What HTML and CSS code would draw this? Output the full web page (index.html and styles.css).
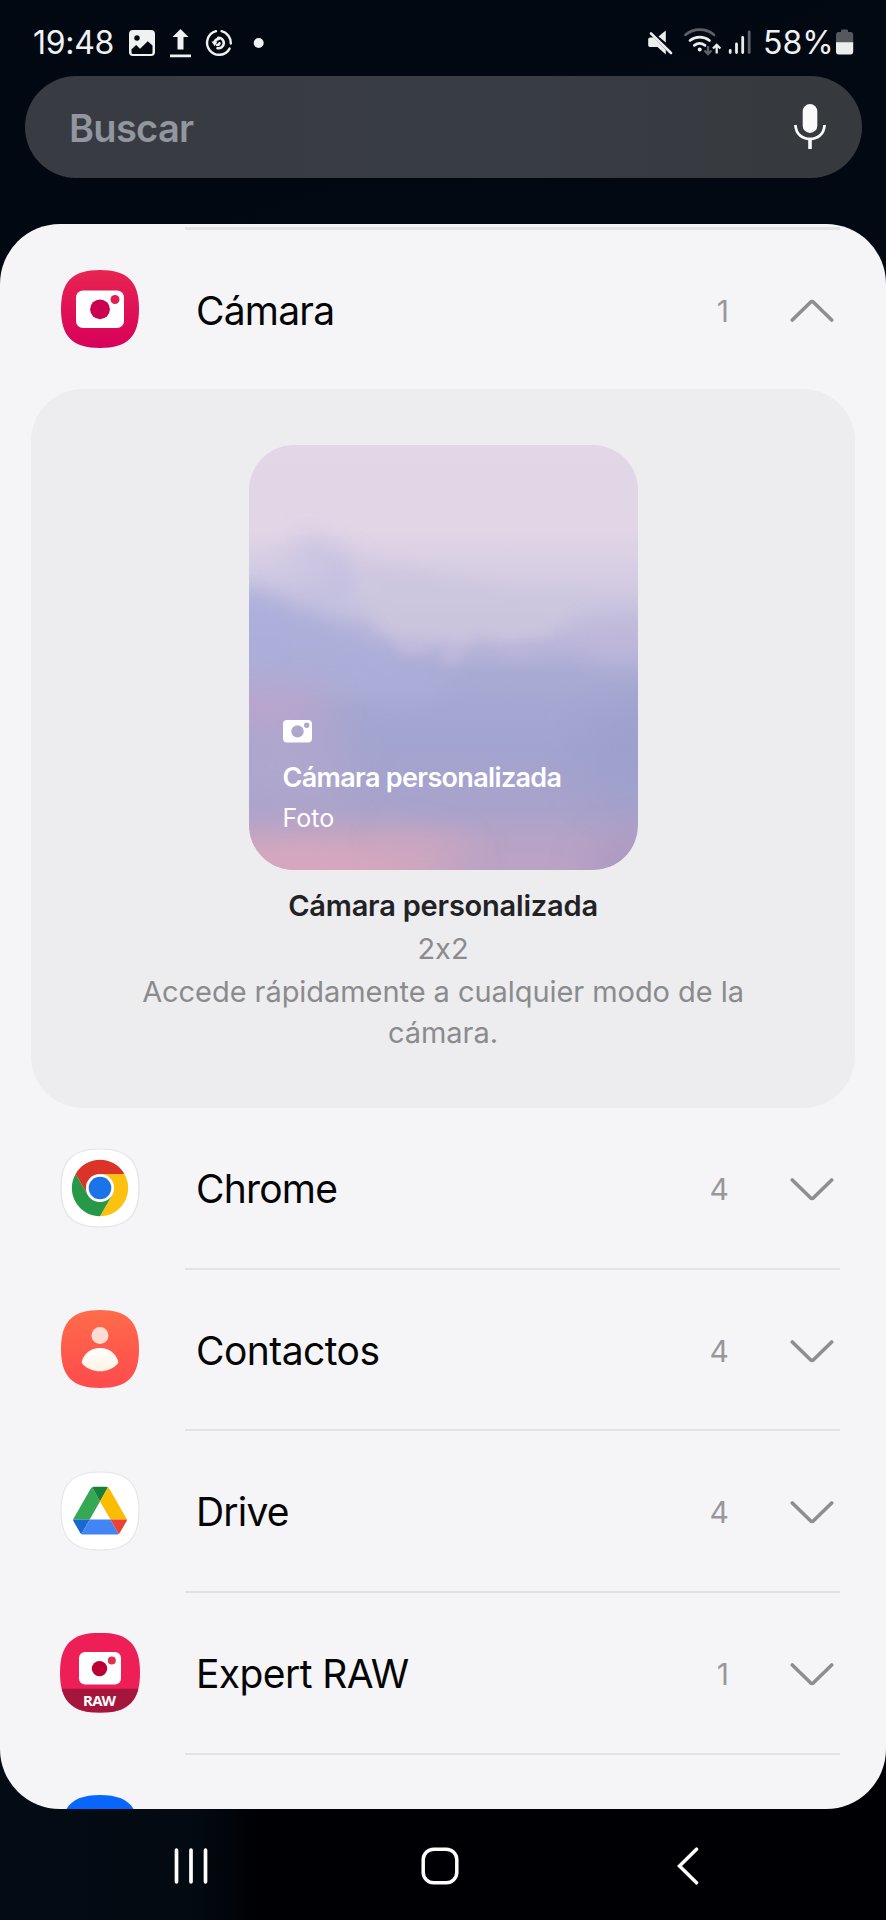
FILE: index.html
```html
<!DOCTYPE html>
<html lang="es">
<head>
<meta charset="utf-8">
<title>Widgets</title>
<link rel="stylesheet" href="styles.css">
</head>
<body>
<svg class="defs" width="0" height="0" aria-hidden="true">
  <defs>
    <linearGradient id="camBg" x1="0" y1="0" x2="0" y2="1"><stop offset="0" stop-color="#e82450"/><stop offset="1" stop-color="#d8005c"/></linearGradient>
    <linearGradient id="conBg" x1="0" y1="0" x2="0" y2="1"><stop offset="0" stop-color="#ff6c4a"/><stop offset="1" stop-color="#ff4a4c"/></linearGradient>
    <linearGradient id="conBody" x1="0" y1="0" x2="0" y2="1"><stop offset="0" stop-color="#ffffff"/><stop offset="1" stop-color="#fff3e4"/></linearGradient>
    <path id="squircle" d="M39 0C66.500 0 78 11.500 78 39S66.500 78 39 78 0 66.500 0 39 11.500 0 39 0Z"/>
    <clipPath id="squircleClip"><use href="#squircle"/></clipPath>
  </defs>
</svg>
<div class="screen">
  <header class="status">
    <span class="clock">19:48</span>
    <svg class="st-left" width="140" height="32" viewBox="126 27 140 32">
      <path fill="#f0f2f2" fill-rule="evenodd" d="M133 30h18a4 4 0 0 1 4 4v18a4 4 0 0 1-4 4h-18a4 4 0 0 1-4-4V34a4 4 0 0 1 4-4Zm4 5.300a2.700 2.700 0 1 0 0 5.400a2.700 2.700 0 0 0 0-5.400ZM131.500 49.300V52.500a1.500 1.500 0 0 0 1.500 1.500h18a1.500 1.500 0 0 0 1.500-1.500V45.500L147.800 41.200 140 48.800 136.200 45Z"/>
      <path fill="#f0f2f2" d="M180.500 29l8 8h-5v12.500h-6V37h-5ZM170 54.500h21v2.700h-21Z"/>
      <g fill="none" stroke="#f0f2f2" stroke-width="2.400" stroke-linecap="round">
        <path d="M216 31.200A12 12 0 1 0 229.600 48.600M221.600 31.200A12 12 0 0 1 230.800 43.500"/>
        <path d="M214.300 42.600a4.600 4.600 0 0 1 4.400-3.600M218.300 37.700a5.300 5.300 0 1 1-.8 10.500M219.500 43.300a2.300 2.300 0 0 1-2.300 1.700" stroke-width="2.600"/>
      </g>
      <path fill="#f0f2f2" d="M211.500 41.600h6l-2.800 4.600Z"/>
      <circle cx="258.700" cy="43" r="5" fill="#f0f2f2"/>
    </svg>
    <svg class="st-right" width="106" height="32" viewBox="647 27 106 32">
      <path fill="#eceeee" d="M658.500 36.500 665.800 30.500V42.500ZM650 37.500h3.500L665.800 50v4.500l-8.300-7.500H650a1.800 1.800 0 0 1-1.800-1.800v-6A1.800 1.800 0 0 1 650 37.500Z"/>
      <path stroke="#eceeee" stroke-width="2.600" stroke-linecap="round" d="M651 33.500 671 53"/>
      <g fill="none" stroke-width="2.700" stroke-linecap="round">
        <path stroke="#5d6167" d="M685.500 34.800a22.500 22.500 0 0 1 28.500 0"/>
        <path stroke="#eceeee" d="M690 40.500a15.500 15.500 0 0 1 19.500 0M694.300 45.400a9 9 0 0 1 10.700 0"/>
      </g>
      <circle cx="699.700" cy="49.600" r="2" fill="#eceeee"/>
      <path fill="none" stroke="#5d6167" stroke-width="2.300" d="M708 46v8M704.500 50.500 708 54l3.500-3.500"/>
      <path fill="none" stroke="#eceeee" stroke-width="2.300" d="M716.700 53.500V45M713 48.500l3.700-3.700 3.700 3.700"/>
      <g stroke-width="2.800" stroke-linecap="round"><path stroke="#eceeee" d="M730.200 50.300v2.300M736.500 44v8.600M742.700 37.500v15.100"/><path stroke="#5d6167" d="M749.200 32v20.600"/></g>
    </svg>
    <span class="percent">58%</span>
    <svg class="batt" width="18" height="27" viewBox="0 0 18 27">
      <path fill="#55585d" d="M5 3V1.800Q5 .5 6.300 .5h4.400Q12 .5 12 1.800V3h2.500Q17.200 3 17.200 6v8H0V6Q0 3 2.700 3Z"/>
      <path fill="#eceeee" d="M0 13.300h17.200v9.200q0 3-2.700 3H2.700q-2.700 0-2.700-3Z"/>
    </svg>
  </header>

  <div class="search">
    <span class="search-label">Buscar</span>
    <svg width="34" height="46" viewBox="0 0 34 46">
      <rect x="9.700" y="0" width="14.600" height="29" rx="7.300" fill="#fafafa"/>
      <path fill="none" stroke="#fafafa" stroke-width="2.800" d="M2.400 21C3 30.500 9.500 35 17 35s14-4.500 14.600-14"/>
      <path stroke="#fafafa" stroke-width="3.600" d="M17 35v10"/>
    </svg>
  </div>

  <main class="sheet">
    <div class="line-top"></div>
    <section class="row row-open">
      <svg class="app-icon" viewBox="0 0 78 78">
        <use href="#squircle" fill="url(#camBg)"/>
        <rect x="15" y="20.500" width="48" height="37.500" rx="7" fill="#fff"/>
        <circle cx="39" cy="39.300" r="9.900" fill="#cc0050"/>
        <circle cx="54" cy="29.500" r="4.500" fill="#e02050"/>
      </svg>
      <div class="row-body"><span class="name">Cámara</span><span class="count">1</span>
        <svg class="chev" viewBox="0 0 44 24"><path d="M2.300 21 20.500 3.200Q22 1.900 23.500 3.200L41.700 21"/></svg></div>
    </section>

    <section class="card">
      <div class="preview">
        <svg class="sky" viewBox="0 0 389 425" preserveAspectRatio="none">
          <defs>
            <linearGradient id="sky" x1="0" y1="0" x2="0" y2="1">
              <stop offset="0" stop-color="#e1d7e7"/><stop offset=".2" stop-color="#e1d5e6"/><stop offset=".28" stop-color="#d9cfe4"/>
              <stop offset=".38" stop-color="#cac6df"/><stop offset=".46" stop-color="#bcb7da"/><stop offset=".53" stop-color="#aaabd4"/>
              <stop offset=".62" stop-color="#a3a7d1"/><stop offset=".72" stop-color="#a2a4cf"/><stop offset=".86" stop-color="#a9a3cb"/><stop offset=".94" stop-color="#b8a3c5"/><stop offset="1" stop-color="#bca3c4"/>
            </linearGradient>
            <filter id="b6" x="-50%" y="-50%" width="200%" height="200%"><feGaussianBlur stdDeviation="7"/></filter>
            <filter id="b12" x="-50%" y="-50%" width="200%" height="200%"><feGaussianBlur stdDeviation="12"/></filter>
            <filter id="b20" x="-50%" y="-80%" width="200%" height="260%"><feGaussianBlur stdDeviation="20"/></filter>
          </defs>
          <rect width="389" height="425" fill="url(#sky)"/>
          <path filter="url(#b12)" fill="#acaed9" opacity=".9" d="M-40 145 20 148 70 165 110 182 135 200 175 222 210 235 170 255-40 240Z"/>
          <path filter="url(#b12)" fill="#bfbcdf" opacity=".7" d="M55 88 110 115 105 170 30 150Z"/>
          <ellipse filter="url(#b12)" cx="45" cy="122" rx="38" ry="16" fill="#d0cae3" opacity=".8"/>
          <path filter="url(#b6)" fill="#ccc6de" opacity=".8" d="M110 115 170 125 260 145 340 155 300 190 260 200 230 190 205 208 190 195 160 203 128 180Z"/>
          <ellipse filter="url(#b6)" cx="203" cy="208" rx="11" ry="11" fill="#bfb8dc"/>
          <ellipse filter="url(#b6)" cx="163" cy="200" rx="16" ry="8" fill="#c1bbdc" opacity=".8"/>
          <ellipse filter="url(#b6)" cx="272" cy="207" rx="22" ry="7" fill="#bab5da" opacity=".8"/>
          <ellipse filter="url(#b12)" cx="375" cy="195" rx="45" ry="24" fill="#bfb7da" opacity=".7"/>
          <ellipse filter="url(#b20)" cx="0" cy="170" rx="22" ry="26" fill="#a8b0de" opacity=".8"/>
          <ellipse filter="url(#b20)" cx="10" cy="265" rx="80" ry="20" fill="#c5a5cb" opacity=".9"/>
          <ellipse filter="url(#b20)" cx="35" cy="320" rx="70" ry="40" fill="#b3a7ce" opacity=".8"/>
          <ellipse filter="url(#b20)" cx="390" cy="310" rx="60" ry="50" fill="#9b9fcc" opacity=".7"/>
          <ellipse filter="url(#b20)" cx="50" cy="420" rx="160" ry="26" fill="#dba8bc"/>
          <ellipse filter="url(#b12)" cx="180" cy="398" rx="60" ry="10" fill="#cfa8c1" opacity=".6"/>
          <ellipse filter="url(#b20)" cx="390" cy="425" rx="50" ry="30" fill="#a697c3" opacity=".9"/>
        </svg>
        <div class="preview-text">
          <svg width="29" height="23" viewBox="0 0 29 23"><path fill="#fff" fill-rule="evenodd" d="M4 0h21a4 4 0 0 1 4 4v14.500a4 4 0 0 1-4 4H4a4 4 0 0 1-4-4V4a4 4 0 0 1 4-4Zm10.500 5.200a6.200 6.200 0 1 0 0 12.400a6.200 6.200 0 0 0 0-12.400Zm9.200-2.700a2.700 2.700 0 1 0 0 5.400a2.700 2.700 0 0 0 0-5.400Z"/></svg>
          <span class="pv-title">Cámara personalizada</span>
          <span class="pv-sub">Foto</span>
        </div>
      </div>
      <span class="w-title">Cámara personalizada</span>
      <span class="w-size">2x2</span>
      <p class="w-desc">Accede rápidamente a cualquier modo de la<br>cámara.</p>
    </section>

    <section class="row">
      <svg class="app-icon" viewBox="0 0 78 78">
        <use href="#squircle" fill="#fff" stroke="#e3e3e5" stroke-width="1.200"/>
        <path fill="#db3328" d="M39 39 26.800 46 14.600 24.900A28.200 28.200 0 0 1 63.400 24.900H39Z"/>
        <path fill="#fdc112" d="M39 24.900H63.400A28.200 28.200 0 0 1 39 67.200L51.200 46Z"/>
        <path fill="#279847" d="M14.600 24.900A28.200 28.200 0 0 0 39 67.200L51.200 46 39 39 26.800 46Z"/>
        <circle cx="39" cy="39" r="14.100" fill="#fff"/><circle cx="39" cy="39" r="11.300" fill="#1a73e8"/>
      </svg>
      <div class="row-body"><span class="name">Chrome</span><span class="count">4</span>
        <svg class="chev" viewBox="0 0 44 24"><path d="M2.300 3 20.500 20.800Q22 22.100 23.500 20.800L41.700 3"/></svg></div>
    </section>
    <section class="row">
      <svg class="app-icon" viewBox="0 0 78 78">
        <use href="#squircle" fill="url(#conBg)"/>
        <circle cx="39" cy="25.500" r="8.500" fill="#ffdcd3"/>
        <path fill="url(#conBody)" d="M39 38C48.500 38 54.800 43.800 57.200 51.200Q57.700 53 56 54.400C51.500 58.800 45.500 61.200 39 61.200S26.500 58.800 22 54.400Q20.300 53 20.800 51.200C23.200 43.800 29.500 38 39 38Z"/>
      </svg>
      <div class="row-body"><span class="name name-loose">Contactos</span><span class="count">4</span>
        <svg class="chev" viewBox="0 0 44 24"><path d="M2.300 3 20.500 20.800Q22 22.100 23.500 20.800L41.700 3"/></svg></div>
    </section>
    <section class="row">
      <svg class="app-icon" viewBox="0 0 78 78">
        <use href="#squircle" fill="#fff" stroke="#e6e6e8" stroke-width="1.200"/>
        <path fill="#34a853" d="M12 47.600 29.500 17Q30.300 15.500 31.300 15.200L39 29.500 28.700 47.600Z"/>
        <path fill="#188038" d="M31.300 15.200Q32 14.800 33 14.800H45Q46 14.800 47 15.200L39 29.500Z"/>
        <path fill="#fbbc04" d="M47 15.200Q47.700 15.600 48.500 17L66 47.600H49.400L39 29.500Z"/>
        <path fill="#1967d2" d="M12 47.600H28.700L20.500 62Q19.600 61.500 19 60.500L12.500 49.300Q12 48.400 12 47.600Z"/>
        <path fill="#4285f4" d="M28.700 47.600H49.400L57.600 62Q57 62.500 56 62.500H22Q21 62.500 20.500 62Z"/>
        <path fill="#ea4335" d="M49.400 47.600H66Q66 48.400 65.500 49.300L59 60.500Q58.400 61.500 57.600 62Z"/>
      </svg>
      <div class="row-body"><span class="name">Drive</span><span class="count">4</span>
        <svg class="chev" viewBox="0 0 44 24"><path d="M2.300 3 20.500 20.800Q22 22.100 23.500 20.800L41.700 3"/></svg></div>
    </section>
    <section class="row">
      <svg class="app-icon" viewBox="0 0 78 78">
        <g clip-path="url(#squircleClip)" transform="translate(-1 -1.200) scale(1.026)"><rect width="78" height="78" fill="#ee1f57"/><rect y="54.500" width="78" height="24" fill="#a5163d"/></g>
        <rect x="18" y="18" width="42" height="32.500" rx="6" fill="#fff"/>
        <circle cx="38.500" cy="34.600" r="7.700" fill="#bd0034"/><circle cx="50.800" cy="26.500" r="4" fill="#e0304f"/>
        <text class="raw" x="38.300" y="72" text-anchor="middle">RAW</text>
      </svg>
      <div class="row-body"><span class="name name-raw">Expert RAW</span><span class="count">1</span>
        <svg class="chev" viewBox="0 0 44 24"><path d="M2.300 3 20.500 20.800Q22 22.100 23.500 20.800L41.700 3"/></svg></div>
    </section>
    <section class="row">
      <svg class="app-icon" viewBox="0 0 78 78"><use href="#squircle" fill="#0866ff"/></svg>
    </section>
  </main>

  <nav class="nav">
    <svg width="34" height="38" viewBox="0 0 34 38"><path stroke="#fff" stroke-width="3.700" stroke-linecap="round" d="M2.500 3.200v31.600M17 3.200v31.600M31.500 3.200v31.600"/></svg>
    <svg width="38" height="38" viewBox="0 0 38 38"><rect x="2.200" y="2.200" width="33.600" height="33.600" rx="10.500" fill="none" stroke="#fff" stroke-width="3.500"/></svg>
    <svg width="24" height="38" viewBox="0 0 24 38"><path fill="none" stroke="#fff" stroke-width="3.500" stroke-linecap="round" d="M20.500 2.200 3.500 19 20.500 35.800"/></svg>
  </nav>
</div>
</body>
</html>
```
FILE: styles.css
```css
* { box-sizing: border-box; }
html, body { margin: 0; }
body { font-family: Inter, Roboto, sans-serif; font-feature-settings: "calt" 0; background: #02080f; }
svg { display: block; flex: none; }
.defs { position: absolute; }
.screen {
  width: 886px; height: 1920px; overflow: hidden;
  display: flex; flex-direction: column;
  background: linear-gradient(90deg, #030b14 0, #030a12 190px, #000004 260px, #000004 100%) 0 1600px no-repeat, linear-gradient(160deg, #020812, #030b14 60%, #02060b);
}
.status { height: 76px; display: flex; align-items: flex-start; padding-left: 33px; color: #f0f2f2; }
.clock, .percent { font-size: 32px; line-height: 32px; margin-top: 27px; white-space: nowrap; }
.clock { width: 93px; letter-spacing: -0.300px; }
.st-left, .st-right { margin-top: 27px; }
.st-right { margin-left: 381px; }
.percent { margin-left: 10px; width: 73px; }
.batt { margin-top: 29px; }
.search {
  margin: 0 24px 0 25px; height: 102px; border-radius: 51px; background: linear-gradient(90deg, #383b42, #383c43 60%, #363a3e);
  display: flex; align-items: center; justify-content: space-between; padding: 0 35px 0 44px;
}
.search-label { font-size: 38px; font-weight: 600; color: #92969f; line-height: 50px; letter-spacing: -0.700px; padding-top: 2px; }
.sheet {
  margin-top: 46px; height: 1585px; flex: none; border-radius: 60px; overflow: hidden; background: #f5f5f8;
  display: flex; flex-direction: column;
}
.line-top { flex: none; height: 3px; margin: 3px 46px 0 185px; background: #e3e3e5; }
.row { flex: none; height: 161.700px; display: flex; align-items: stretch; padding: 0 46px 0 61px; }
.row-open { height: 159px; }
.app-icon { width: 78px; height: 78px; margin-top: 40.500px; overflow: visible; }
.row-open .app-icon { margin-top: 39.700px; }
.row-body { margin-left: 46px; flex: 1; display: flex; align-items: center; border-bottom: 2.700px solid #e2e2e4; padding: 2px 6px 0 11px; }
.row-open .row-body { border: 0; }
.name { flex: 1; font-size: 39px; line-height: 50px; color: #050505; white-space: nowrap; letter-spacing: -0.800px; }
.name-loose { letter-spacing: -0.550px; }
.name-raw { letter-spacing: -0.600px; }
.count { font-size: 30px; line-height: 40px; color: #98989c; }
.chev { width: 44px; height: 24px; margin-left: 61px; }
.chev path { fill: none; stroke: #8e8e92; stroke-width: 3.600; stroke-linecap: round; }
.raw { font: 700 15px "Noto Sans", sans-serif; fill: #fff; letter-spacing: -0.500px; }
.card {
  flex: none; margin: 0 31px; height: 719px; border-radius: 52px; background: #ededef; padding-top: 55.500px;
  display: flex; flex-direction: column; align-items: center;
}
.preview { flex: none; width: 389px; height: 425px; border-radius: 45px; overflow: hidden; display: grid; }
.sky, .preview-text { grid-area: 1 / 1; }
.sky { width: 389px; height: 425px; }
.preview-text { z-index: 1; padding: 275px 0 0 34px; display: flex; flex-direction: column; color: #fff; }
.pv-title { font-size: 27px; font-weight: 600; line-height: 36px; margin-top: 17px; letter-spacing: -0.660px; }
.pv-sub { font-size: 25px; line-height: 32px; margin-top: 6px; }
.w-title { font-size: 29px; font-weight: 600; line-height: 40px; margin-top: 16px; color: #222225; letter-spacing: -0.200px; }
.w-size { font-size: 29px; line-height: 42px; margin-top: 2px; color: #8b8b8d; }
.w-desc { margin: 1px 0 0; font-size: 29px; line-height: 41.500px; color: #8b8b8d; text-align: center; white-space: nowrap; letter-spacing: -0.060px; }
.nav { height: 111px; display: flex; align-items: center; padding: 3px 0 0 174px; gap: 212px; }
.nav svg:nth-child(2) { margin-left: 1px; }
.nav svg:last-child { margin-left: 5px; }
```
